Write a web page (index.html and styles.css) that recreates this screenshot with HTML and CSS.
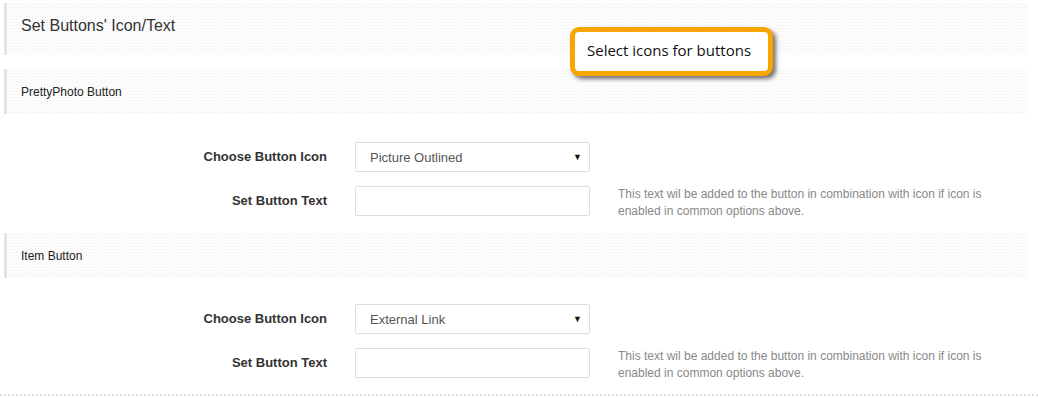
FILE: index.html
```html
<!DOCTYPE html>
<html lang="en">
<head>
    <meta charset="UTF-8">
    <title>Set Buttons' Icon/Text</title>
    <link rel="stylesheet" href="styles.css">
</head>
<body>
    <div class="panel">
        <div class="section-title">Set Buttons' Icon/Text</div>

        <div class="group-title">PrettyPhoto Button</div>
        <div class="fields">
            <div class="row">
                <label class="label">Choose Button Icon</label>
                <div class="select">Picture Outlined</div>
                <div></div>
            </div>
            <div class="row">
                <label class="label">Set Button Text</label>
                <input class="text-input" type="text">
                <p class="help">This text wil be added to the button in combination with icon if icon is enabled in common options above.</p>
            </div>
        </div>

        <div class="group-title">Item Button</div>
        <div class="fields last">
            <div class="row">
                <label class="label">Choose Button Icon</label>
                <div class="select">External Link</div>
                <div></div>
            </div>
            <div class="row">
                <label class="label">Set Button Text</label>
                <input class="text-input" type="text">
                <p class="help">This text wil be added to the button in combination with icon if icon is enabled in common options above.</p>
            </div>
        </div>
        <div class="bottom-line"></div>

        <!-- callout -->
        <div class="callout">Select icons for buttons</div>
    </div>
</body>
</html>
```

FILE: styles.css
```css
* {
    margin: 0;
    padding: 0;
    box-sizing: border-box;
}

body {
    font-family: 'Liberation Sans', Arial, sans-serif;
    background: white;
    color: #333;
}

.panel {
    position: relative;
    width: 1038px;
    height: 398px;
    padding-top: 3px;
}

.section-title,
.group-title {
    margin: 0 10px 0 4px;
    border-left: 3px solid #e3e3e3;
    padding-left: 14px;
    display: flex;
    align-items: center;
    background-color: #fcfcfc;
    background-image: radial-gradient(circle, #f0f0f0 0.8px, transparent 1px);
    background-size: 3px 3px;
}

.section-title {
    height: 52px;
    font-size: 16px;
    padding-bottom: 6px;
    margin-bottom: 14px;
}

.group-title {
    height: 45px;
    font-size: 12px;
    color: #222;
}

.fields {
    padding: 28px 0 13px;
    display: flex;
    flex-direction: column;
    gap: 14px;
}

.fields.last {
    padding-top: 26px;
    padding-bottom: 12px;
}

.row {
    display: grid;
    grid-template-columns: 327px 235px 380px;
    column-gap: 28px;
    align-items: start;
}

.label {
    text-align: right;
    font-size: 13px;
    line-height: 30px;
    font-weight: bold;
    color: #333;
}

.select {
    position: relative;
    height: 30px;
    border: 1px solid #ddd;
    border-radius: 2px;
    padding-left: 14px;
    display: flex;
    align-items: center;
    font-size: 13px;
    color: #555;
}

.select::after {
    content: "▼";
    position: absolute;
    right: 7px;
    top: 9px;
    font-size: 9px;
    color: #111;
}

.text-input {
    height: 30px;
    border: 1px solid #ddd;
    border-radius: 2px;
    font-family: inherit;
}

.help {
    font-size: 12px;
    line-height: 17px;
    color: #888;
}

.bottom-line {
    border-top: 2px dotted #ddd;
}

.callout {
    position: absolute;
    left: 570px;
    top: 27px;
    width: 203px;
    height: 49px;
    border: 5px solid #f7a600;
    border-radius: 9px;
    background: white;
    box-shadow: 3px 3px 4px rgba(0, 0, 0, 0.55);
    display: flex;
    align-items: center;
    padding: 0 0 3px 12px;
    font-family: 'Open Sans', 'Noto Sans', sans-serif;
    font-size: 15px;
    color: #111;
}
```
